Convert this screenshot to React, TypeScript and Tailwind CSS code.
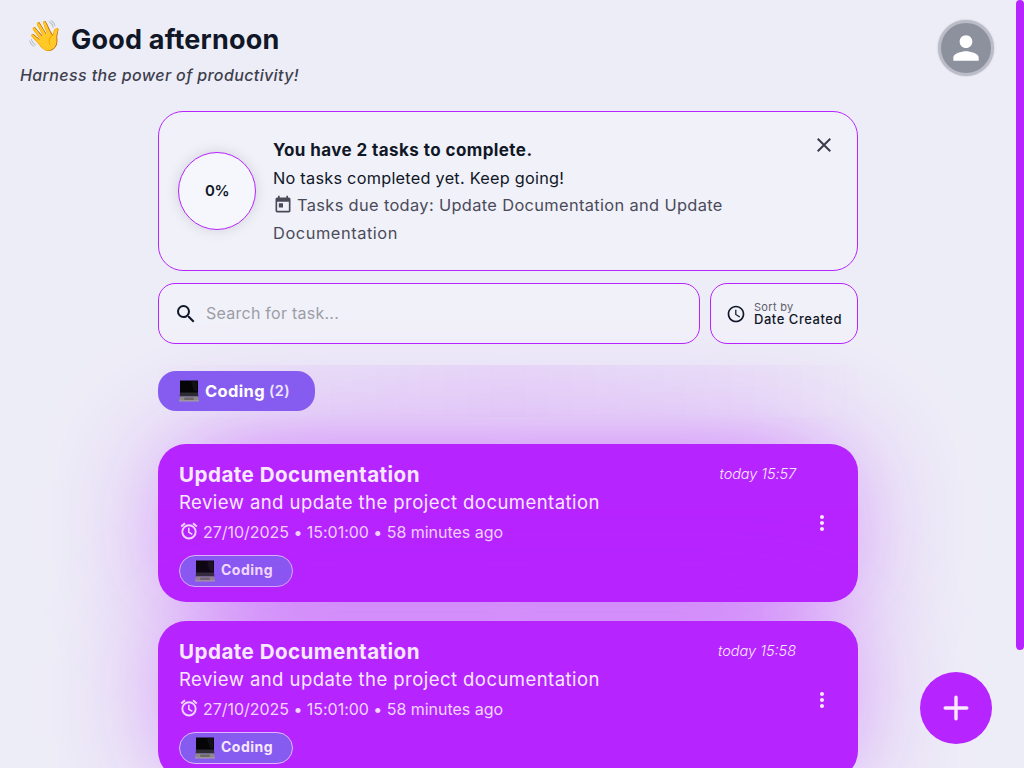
import { MdAccessTime, MdClose, MdMoreVert, MdPerson, MdSearch, MdToday } from "react-icons/md";

function Laptop({ className }: { className: string }) {
  return (
    <svg viewBox="0 0 20 22" className={className} aria-hidden="true">
      <path d="M1 .5h18v15.5H1z" fill="#050507" />
      <path d="M12 1.5 18.2 1v10.4L15 11z" fill="#121216" />
      <path d="M1 12.5h18l.3 4H.7z" fill="#2c2c33" />
      <path d="M.9 16.5h18.2l.9 4.2H0z" fill="#8d8989" />
      <path d="M5.5 17.5h9l.5 2.6H5z" fill="#6c686a" />
      <path d="M0 20.2h20v1.3H0z" fill="#a39c9c" />
    </svg>
  );
}

function AlarmIcon({ className }: { className: string }) {
  return (
    <svg viewBox="0 0 24 24" className={className} fill="none" stroke="currentColor" aria-hidden="true">
      <circle cx="12" cy="13" r="8" strokeWidth="2.3" />
      <path d="M11.8 8v5.5l4.2 2.5" strokeWidth="1.9" />
      <path d="M2.6 6.5l4.6-3.9M21.4 6.5l-4.6-3.9" strokeWidth="2.3" />
    </svg>
  );
}

function TaskCard({ time, timeClass }: { time: string; timeClass: string }) {
  return (
    <article className="flex h-[158px] shrink-0 rounded-[28px] bg-[#b624ff] pl-[21px] text-[#f8e8ff] shadow-[0_0_128px_-28px_#b624ff]">
      <div className="flex min-w-0 flex-1 flex-col pt-4">
        <div className="flex h-[29px] items-center justify-between">
          <h2 className="pt-0.5 text-[20.6px] font-bold tracking-[0.45px] whitespace-nowrap">Update Documentation</h2>
          <time className={`pb-px text-[14.5px] font-light italic ${timeClass}`}>{time}</time>
        </div>
        <p className="h-[27px] text-[18.5px] leading-[27px] tracking-[0.45px] whitespace-nowrap">
          Review and update the project documentation
        </p>
        <p className="mt-0.5 flex h-7 items-center text-[16px] tracking-[-0.032px] text-[#f3d5ff]">
          <AlarmIcon className="mr-1 mb-0.5 size-5" />
          27/10/2025 • 15:01:00 • 58 minutes ago
        </p>
        <div className="mt-[9px] flex h-8 w-[114px] items-center rounded-full border border-[#dfb5fb] bg-[#865cf0] pl-[15px] text-[14px] font-bold tracking-[0.48px]">
          <Laptop className="mr-[6px] h-[22px] w-5" />
          <span className="pb-[3px]">Coding</span>
        </div>
      </div>
      <button className="mr-6 ml-[14px] flex w-6 items-center justify-center" aria-label="Task menu">
        <MdMoreVert className="size-6" />
      </button>
    </article>
  );
}

export default function App() {
  return (
    <div className="flex h-screen overflow-hidden bg-[#ededf7] font-['Inter','Liberation_Sans',sans-serif] text-[#101727]">
      <div className="flex min-w-0 flex-1 flex-col">
        <header className="flex h-[111px] shrink-0 justify-between pr-[22px] pl-5">
          <div className="pt-4">
            <div className="flex h-12 items-center">
              <span className="mr-[9px] ml-[6px] w-9 pb-2.5 text-[30px] leading-9 whitespace-nowrap">👋</span>
              <h1 className="text-[27px] font-bold tracking-[0.193px]">Good afternoon</h1>
            </div>
            <p className="text-[16px] leading-[22px] font-medium tracking-[0.375px] text-[#3d3f4e] italic">
              Harness the power of productivity!
            </p>
          </div>
          <div className="mt-5 flex size-14 items-center justify-center rounded-full border-[3px] border-[#babcc7] bg-[#8d919e] text-white shadow-[0_0_2px_#b9bac5]">
            <MdPerson className="size-[38px]" />
          </div>
        </header>

        <main className="mx-auto flex min-h-0 w-[700px] flex-1 flex-col">
          <section className="flex h-[160px] shrink-0 items-center rounded-[25px] border border-[#b624ff] bg-[#f1f1f9] pl-[19px]">
            <div className="flex size-[78px] shrink-0 items-center justify-center rounded-full border border-[#b624ff] bg-[#f6f6fd] text-[15px] font-semibold tracking-[-0.4px] shadow-[0_0_14px_rgba(0,0,0,0.13)]">
              0%
            </div>
            <div className="ml-[17px] h-full flex-1 pt-6 leading-[28px] whitespace-nowrap">
              <h3 className="h-7 text-[17px] font-bold tracking-[0.416px]">You have 2 tasks to complete.</h3>
              <p className="h-[27px] text-[16.3px] tracking-[0.25px]">No tasks completed yet. Keep going!</p>
              <div className="text-[16.4px] text-[#4a4b59]">
                <p className="flex items-center tracking-[0.35px]">
                  <MdToday className="mr-[4px] size-5" />
                  Tasks due today: Update Documentation and Update
                </p>
                <p className="tracking-[0.55px]">Documentation</p>
              </div>
            </div>
            <button className="mr-[21px] flex size-6 self-start pt-[21px]" aria-label="Close">
              <MdClose className="size-6 shrink-0 text-[#3b3c4b]" />
            </button>
          </section>

          <div className="mt-3 flex h-[61px] shrink-0 gap-2.5">
            <div className="flex flex-1 items-center rounded-[17px] border border-[#b624ff] bg-[#f1f1f9] pl-[15px]">
              <MdSearch className="size-6" />
              <span className="ml-2 pb-0.5 text-[16px] tracking-[0.249px] text-[#9c9da6]">Search for task...</span>
            </div>
            <div className="flex w-[148px] items-center rounded-[17px] border border-[#b624ff] bg-[#f1f1f9] pl-[15px]">
              <MdAccessTime className="mr-2 size-5" />
              <div className="whitespace-nowrap">
                <p className="text-[11px] leading-[12px] tracking-[0.304px] text-[#5d5e6b]">Sort by</p>
                <p className="text-[13px] leading-[13px] font-medium tracking-[0.534px]">Date Created</p>
              </div>
            </div>
          </div>

          <nav className="relative z-10 mt-[21px] flex h-[52px] shrink-0 items-center bg-linear-to-r from-[#b624ff]/0 via-[#b624ff]/6 to-[#b624ff]/0 backdrop-blur-[24px]">
            <button className="flex h-10 w-[157px] items-center rounded-[18px] bg-[#865cf0] pl-[21px] text-[16.5px] font-bold tracking-[0.349px] text-white">
              <Laptop className="mr-[6px] h-[22px] w-5" />
              Coding
              <span className="ml-1 text-[14.5px] font-semibold tracking-[0.443px] text-[#eee6ff]">(2)</span>
            </button>
          </nav>

          <div className="mt-[27px] flex flex-col gap-[19px]">
            <TaskCard time="today 15:57" timeClass="tracking-[-0.074px]" />
            <TaskCard time="today 15:58" timeClass="tracking-normal" />
          </div>
        </main>
      </div>

      <div className="relative z-20 h-[650px] w-2 shrink-0 rounded-full bg-[#b624ff]" />

      <button
        className="fixed right-8 bottom-6 z-20 flex size-[72px] items-center justify-center rounded-full bg-[#b624ff]"
        aria-label="Add task"
      >
        <svg viewBox="0 0 26 26" className="size-[26px]" fill="none" stroke="#fbeaff" strokeWidth="3.4" strokeLinecap="round">
          <path d="M13 2.2v21.6M2.2 13h21.6" />
        </svg>
      </button>
    </div>
  );
}
